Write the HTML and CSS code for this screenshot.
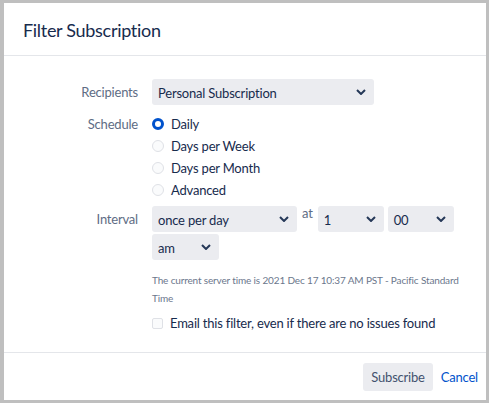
FILE: index.html
```html
<!DOCTYPE html>
<html>
<head>
<meta charset="utf-8">
<link rel="stylesheet" href="styles.css">
</head>
<body>
<div class="frame">
  <div class="dialog">
    <div class="header"><h2 class="title">Filter Subscription</h2></div>
    <div class="content">
      <div class="row">
        <div class="label lbl-select">Recipients</div>
        <div class="field">
          <div class="select w-recip"><span>Personal Subscription</span><svg class="chev" viewBox="0 0 10 6"><path d="M1 1l4 4 4-4" /></svg></div>
        </div>
      </div>
      <div class="row row-sched">
        <div class="label lbl-radio">Schedule</div>
        <div class="field radios">
          <div class="radio-row"><span class="radio checked"></span><span>Daily</span></div>
          <div class="radio-row"><span class="radio"></span><span>Days per Week</span></div>
          <div class="radio-row"><span class="radio"></span><span>Days per Month</span></div>
          <div class="radio-row"><span class="radio"></span><span>Advanced</span></div>
        </div>
      </div>
      <div class="row row-interval">
        <div class="label lbl-select">Interval</div>
        <div class="field">
          <div class="interval">
            <div class="select w-freq"><span>once per day</span><svg class="chev" viewBox="0 0 10 6"><path d="M1 1l4 4 4-4" /></svg></div>
            <span class="at">at</span>
            <div class="select w-small"><span>1</span><svg class="chev" viewBox="0 0 10 6"><path d="M1 1l4 4 4-4" /></svg></div>
            <div class="select w-small"><span>00</span><svg class="chev" viewBox="0 0 10 6"><path d="M1 1l4 4 4-4" /></svg></div>
            <div class="select w-ampm"><span>am</span><svg class="chev" viewBox="0 0 10 6"><path d="M1 1l4 4 4-4" /></svg></div>
          </div>
          <p class="server-time">The current server time is 2021 Dec 17 10:37 AM PST - Pacific Standard Time</p>
          <div class="check-row"><span class="checkbox"></span><span>Email this filter, even if there are no issues found</span></div>
        </div>
      </div>
    </div>
    <div class="footer">
      <button class="btn">Subscribe</button>
      <a class="cancel">Cancel</a>
    </div>
  </div>
</div>
</body>
</html>
```
FILE: styles.css
```css
html, body {
  margin: 0;
  padding: 0;
  background: #bfbfbf;
}
body {
  font-family: Lato, "Liberation Sans", sans-serif;
  font-size: 13px;
  letter-spacing: -0.2px;
  color: #172b4d;
}
.frame {
  width: 489px;
  height: 403px;
  box-sizing: border-box;
  padding: 3px 3px 3px 4px;
}
.dialog {
  background: #fff;
  height: 100%;
  display: flex;
  flex-direction: column;
}
.header {
  height: 53px;
  box-sizing: border-box;
  border-bottom: 1px solid #e4e6ea;
  padding: 0 19px;
  display: flex;
  align-items: center;
}
.title {
  margin: 0;
  font-size: 18px;
  letter-spacing: -0.3px;
  font-weight: 400;
  color: #172b4d;
  padding-top: 2px;
}
.content {
  flex: 1;
  padding-top: 23px;
}
.row {
  display: flex;
}
.label {
  width: 148px;
  text-align: right;
  color: #5e6c84;
  flex: none;
  padding-right: 14px;
  box-sizing: border-box;
}
.lbl-select { line-height: 26px; }
.lbl-radio { line-height: 22px; padding-top: 8px; }
.field { flex: 1; }
.select {
  background: #ebecf0;
  border-radius: 3px;
  height: 26px;
  box-sizing: border-box;
  display: flex;
  align-items: center;
  justify-content: space-between;
  padding: 0 8px 0 6px;
  color: #172b4d;
}
.select span { padding-top: 1px; }
.chev {
  width: 10px;
  height: 6px;
  fill: none;
  stroke: #253858;
  stroke-width: 2;
}
.w-recip { width: 222px; }
.w-freq { width: 145px; }
.w-small { width: 66px; }
.w-ampm { width: 67px; }
.radios { padding-top: 8px; }
.radio-row {
  display: flex;
  align-items: center;
  height: 22px;
}
.radio {
  width: 12px;
  height: 12px;
  border-radius: 50%;
  box-sizing: border-box;
  border: 1px solid #dfe1e6;
  background: #fafbfc;
  margin-right: 7px;
  flex: none;
}
.radio.checked {
  border: 3.5px solid #0052cc;
  background: #fff;
}
.row-interval { margin-top: 5px; }
.interval {
  display: flex;
  flex-wrap: wrap;
  align-items: flex-start;
  gap: 2px 4px;
}
.at {
  font-size: 13px;
  color: #5e6c84;
  line-height: 14px;
  padding: 0 1px;
}
.server-time {
  margin: 11px 0 0;
  font-size: 10px;
  letter-spacing: -0.15px;
  line-height: 18px;
  color: #6b778c;
  width: 322px;
}
.check-row {
  display: flex;
  align-items: center;
  margin-top: 7px;
  height: 18px;
}
.checkbox {
  width: 11px;
  height: 11px;
  box-sizing: border-box;
  border: 1px solid #dfe1e6;
  border-radius: 2px;
  background: #fafbfc;
  margin-right: 7px;
}
.footer {
  height: 48px;
  box-sizing: border-box;
  border-top: 1px solid #e4e6ea;
  display: flex;
  justify-content: flex-end;
  align-items: center;
  padding: 1px 8px 0 0;
  gap: 8px;
}
.btn {
  font: inherit;
  letter-spacing: inherit;
  background: #ebecf0;
  color: #42526e;
  border: none;
  border-radius: 3px;
  height: 28px;
  padding: 0 8px;
}
.cancel {
  color: #0052cc;
}
```
